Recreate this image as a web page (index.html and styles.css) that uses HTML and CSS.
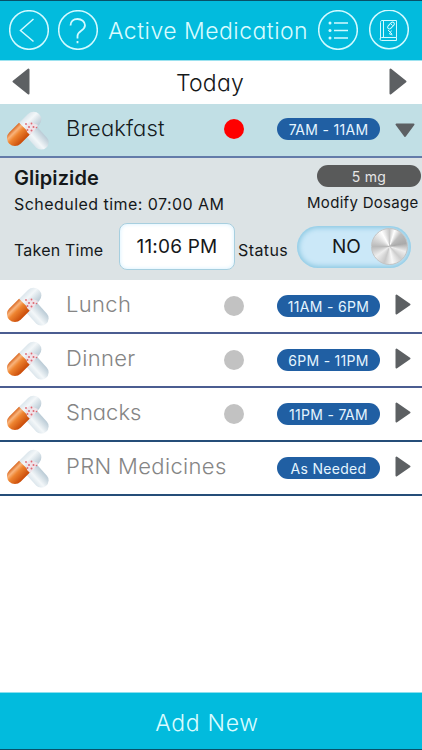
FILE: index.html
```html
<!DOCTYPE html>
<html lang="en">
<head>
<meta charset="utf-8">
<title>Active Medication</title>
<link rel="stylesheet" href="styles.css">
</head>
<body>
<svg width="0" height="0" class="defs" aria-hidden="true">
  <defs>
    <linearGradient id="orange" x1="0" y1="0" x2="1" y2="0">
      <stop offset="0" stop-color="#d9661f"/><stop offset=".22" stop-color="#f9b47c"/><stop offset=".45" stop-color="#ee8430"/><stop offset="1" stop-color="#c94a08"/>
    </linearGradient>
    <linearGradient id="pale" x1="0" y1="0" x2="1" y2="0">
      <stop offset="0" stop-color="#dce6ec"/><stop offset=".35" stop-color="#f3f7f9"/><stop offset="1" stop-color="#b9cad5"/>
    </linearGradient>
    <symbol id="pills" viewBox="0 0 44 42">
      <g transform="translate(34.300 33.300) rotate(-42)"><path d="M-7.300-15.500h14.600V0a7.300 7.300 0 0 1-14.600 0z" fill="url(#pale)"/></g>
      <g transform="translate(17 20) rotate(45)">
        <path d="M-7.800 0v-13.500a7.800 7.800 0 0 1 15.600 0V0z" fill="url(#pale)"/>
        <path d="M-8-1h16v13.800a8 8 0 0 1-16 0z" fill="url(#orange)"/>
      </g>
      <path d="M19 16l4-3 8 3-4 6-4 4-3-3z" fill="#efe3e9"/>
      <g fill="#de6872"><circle cx="19" cy="15" r=".9"/><circle cx="24.500" cy="14.500" r=".9"/><circle cx="22" cy="18" r="1"/><circle cx="26.500" cy="18" r="1"/><circle cx="20.500" cy="21" r=".9"/><circle cx="24.500" cy="21.500" r="1"/><circle cx="29.500" cy="18.500" r=".8"/></g>
    </symbol>
    <symbol id="tri" viewBox="0 0 16 21"><path d="M1.500 1.500v18L14.500 10.500z" fill="#5d6063" stroke="#5d6063" stroke-width="2" stroke-linejoin="round"/></symbol>
  </defs>
</svg>
<div class="app">
  <header class="header">
    <svg class="round" viewBox="0 0 40 40"><circle cx="20" cy="20" r="19.300"/><path d="M24.500 9 11.500 20.500 24.500 31.500"/></svg>
    <svg class="round help" viewBox="0 0 40 40"><circle cx="20" cy="20" r="19.300"/><path d="M12.500 15.500c0-4 3-6.500 7-6.500s7.500 2.500 7.500 6.300c0 5.700-7.500 5.200-7.500 10.700v2.500M19.500 31v2.200" stroke-width="1.800"/></svg>
    <h1 class="title">Active Medication</h1>
    <svg class="round list" viewBox="0 0 40 40"><circle cx="20" cy="20" r="19.300"/><path d="M16 13h14M16 20.500h14M16 28h14"/><g class="dots"><circle cx="12" cy="13" r="1.500"/><circle cx="12" cy="20.500" r="1.500"/><circle cx="12" cy="28" r="1.500"/></g></svg>
    <svg class="round book" viewBox="0 0 40 40"><circle cx="20" cy="19.500" r="19.300"/><g stroke-width="1"><path d="M12.500 10.500h15v17h-15a1.500 1.500 0 0 0 0 3h15v-3M12.500 10.500q-1 .5-1 2v16M14.500 11v16"/><rect x="18" y="13.700" width="8" height="3.600" rx="1.800" transform="rotate(-45 22 15.500)"/><path d="M19 20l4 4M22.500 20.500l-2 3.500 3 1M22 14l1.500 1.500"/></g></svg>
  </header>
  <nav class="day">
    <svg class="prev" viewBox="0 0 18 27"><path d="M16.500 1.500v24L1.500 13.500z"/></svg>
    <span class="today">Today</span>
    <svg class="next" viewBox="0 0 18 27"><path d="M1.500 1.500v24L16.500 13.500z"/></svg>
  </nav>
  <main>
    <section class="row active">
      <svg class="pills"><use href="#pills"/></svg><span class="meal">Breakfast</span><i class="dot"></i><span class="pill">7AM - 11AM</span>
      <svg class="open" viewBox="0 0 20 15"><path d="M1.500 1.500h17L10 13z"/></svg>
    </section>
    <section class="detail">
      <div class="top">
        <div class="info"><h2 class="drug">Glipizide</h2><span class="sched">Scheduled time: 07:00 AM</span></div>
        <div class="dose"><span class="mg">5 mg</span><span class="modify">Modify Dosage</span></div>
      </div>
      <div class="controls">
        <span class="taken">Taken Time</span><span class="time">11:06 PM</span><span class="status">Status</span>
        <div class="toggle"><span>NO</span><i class="knob"></i></div>
      </div>
    </section>
    <section class="row"><svg class="pills"><use href="#pills"/></svg><span class="meal wide">Lunch</span><i class="dot"></i><span class="pill">11AM - 6PM</span><svg class="tri"><use href="#tri"/></svg></section>
    <section class="row"><svg class="pills"><use href="#pills"/></svg><span class="meal wide">Dinner</span><i class="dot"></i><span class="pill">6PM - 11PM</span><svg class="tri"><use href="#tri"/></svg></section>
    <section class="row deep"><svg class="pills"><use href="#pills"/></svg><span class="meal">Snacks</span><i class="dot"></i><span class="pill">11PM - 7AM</span><svg class="tri"><use href="#tri"/></svg></section>
    <section class="row deep"><svg class="pills"><use href="#pills"/></svg><span class="meal wide">PRN Medicines</span><span class="pill">As Needed</span><svg class="tri"><use href="#tri"/></svg></section>
  </main>
  <footer class="footer">Add New</footer>
</div>
</body>
</html>
```
FILE: styles.css
```css
* { box-sizing: border-box; }
body { margin: 0; background: #fff; font-family: Inter, "Liberation Sans", sans-serif; color: #15181a; }
.defs { position: absolute; }
.app { width: 422px; height: 750px; display: flex; flex-direction: column; overflow: hidden; white-space: nowrap; }
h1, h2 { margin: 0; font-weight: 400; }
svg { display: block; flex: none; }
.title, .today, .meal, .footer { font-weight: 300; font-feature-settings: "cv11"; }

.header { height: 61px; flex: none; display: flex; align-items: center; padding: 0 0 1px 9px; background: #02bbdd; border-top: 1px solid #075169; border-bottom: 1px solid #9ce2ef; color: #d9fbff; }
.round { width: 40px; height: 40px; fill: none; stroke: #d3faff; stroke-width: 1.5; }
.round .dots { fill: #d3faff; stroke: none; }
.help { margin-left: 9px; }
.title { width: 201px; margin-left: 10px; padding-top: 2px; font-size: 23px; letter-spacing: .48px; }
.list { margin-left: 9px; }
.book { margin-left: 11px; }

.day { height: 43px; flex: none; display: flex; align-items: center; justify-content: space-between; padding: 0 15px 2px 12px; }
.prev, .next { width: 18px; height: 27px; fill: #5d6063; stroke: #5d6063; stroke-width: 2; stroke-linejoin: round; }
.today { font-size: 23px; padding: 2px 0 0 1px; letter-spacing: .2px; }

.row { height: 54px; display: grid; grid-template-columns: 59px 158px 53px 103px 1fr; align-items: center; padding-left: 7px; border-bottom: 2px solid #4b5d91; }
.row.deep { border-color: #254e79; }
.row.active { background: #c1dfe5; border-color: #637ba9; padding-bottom: 2px; }
.pills { width: 44px; height: 42px; margin-bottom: 1px; }
.active .pills { margin: 2px 0 0; }
.meal { font-size: 22px; color: #858585; padding-bottom: 4px; }
.meal.wide { letter-spacing: .35px; }
.active .meal { color: #151b1e; letter-spacing: .1px; padding-bottom: 3px; }
.dot { width: 20px; height: 20px; border-radius: 50%; background: #c2c2c2; }
.active .dot { background: #f00; }
.pill { grid-column: 4; width: 103px; height: 22px; line-height: 23px; border-radius: 11px; background: #205fa3; color: #e5f5ff; text-align: center; font-size: 14px; letter-spacing: .3px; }
.tri { grid-column: 5; width: 16px; height: 21px; margin: 0 0 3px 15px; }
.open { width: 20px; height: 15px; margin: 3px 0 0 15px; fill: #5d6063; stroke: #5d6063; stroke-width: 2; stroke-linejoin: round; }

.detail { height: 122px; padding: 7px 0 0 14px; background: #dce3e5; }
.top { display: flex; justify-content: space-between; height: 58px; }
.drug { font-size: 20px; font-weight: 600; line-height: 26px; letter-spacing: .1px; }
.sched { display: block; font-size: 16px; line-height: 20px; margin-top: 3px; letter-spacing: .45px; }
.dose { width: 115px; }
.mg { display: block; width: 104px; height: 22px; margin-left: 10px; border-radius: 11px; background: #595a5a; color: #e6e6e6; font-size: 14px; line-height: 23px; text-align: center; letter-spacing: .3px; }
.modify { display: block; font-size: 15px; line-height: 20px; margin-top: 6px; letter-spacing: .3px; }
.controls { display: flex; align-items: center; height: 47px; }
.taken { width: 105px; padding-top: 6px; font-size: 16px; letter-spacing: .2px; }
.time { width: 116px; height: 47px; border: 1.5px solid #a7cfdf; border-radius: 8px; background: #fff; box-shadow: inset 0 0 4px #d2efff; line-height: 45px; text-align: center; font-size: 19px; letter-spacing: .2px; }
.status { width: 62px; padding: 6px 0 0 3px; font-size: 16px; letter-spacing: .4px; }
.toggle { width: 114px; height: 42px; border-radius: 21px; background: #cbe8f8; box-shadow: inset 0 0 5px 2px #8bc8e2; display: flex; align-items: center; justify-content: space-between; padding: 0 3px 0 35px; font-size: 19px; }
.knob { width: 37px; height: 37px; border-radius: 50%; border: 1px solid #c4c4c4; background: conic-gradient(#c6c6c6, #fff 5%, #bdbdbd 12%, #aaa 22%, #eee 30%, #ccc 38%, #f8f8f8 47%, #c8c8c8 55%, #eee 65%, #b9b9b9 75%, #ddd 84%, #fff 92%, #c6c6c6); }

.footer { height: 58px; margin-top: auto; flex: none; background: #02bbdd; color: #d9fbff; border-top: 1px solid #8bdfee; border-bottom: 1px solid #075169; text-align: center; font-size: 23px; letter-spacing: .7px; line-height: 60px; padding-right: 8px; }
```
